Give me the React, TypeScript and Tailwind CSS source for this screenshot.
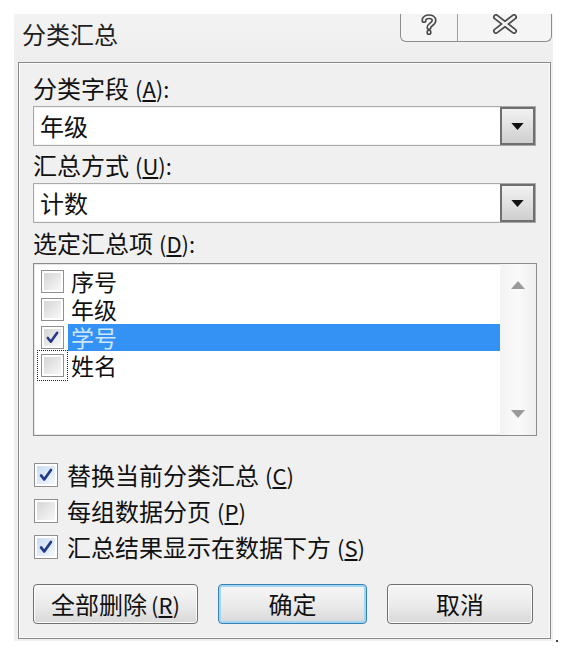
import React from 'react';

const FONT = '"Noto Sans CJK SC", "Noto Sans", sans-serif';

function Check({ color = '#23398a' }: { color?: string }) {
  return (
    <svg viewBox="0 0 20 20" className="h-full w-full">
      <path d="M4.5 10.5 L8 15 L15.5 4.5" fill="none" stroke={color} strokeWidth="3" strokeLinecap="round" strokeLinejoin="round" />
    </svg>
  );
}

function Box({ checked, size, tint, focus }: { checked?: boolean; size: number; tint?: boolean; focus?: boolean }) {
  return (
    <div
      className={
        'shrink-0 p-[1px] ' +
        (focus ? 'outline outline-1 outline-dotted outline-[#222] outline-offset-[2px] ' : '')
      }
      style={{ width: size, height: size }}
    >
      <div className="h-full w-full border border-[#8e8f8f] bg-white p-[2px]">
        <div
          className={
            'h-full w-full ' +
            (tint
              ? 'bg-linear-to-br from-[#c9dcf2] to-[#f3f8fd]'
              : 'bg-linear-to-br from-[#d6d6d6] to-[#f8f8f8]')
          }
        >
          {checked && <Check />}
        </div>
      </div>
    </div>
  );
}

function Combo({ value }: { value: string }) {
  return (
    <div className="flex h-[40px] border border-[#a9a9a9] bg-white shadow-[inset_0_0_0_1px_#f4f4f4]">
      <div className="flex flex-1 items-center pl-[6px] text-[24px] leading-none text-[#111]">{value}</div>
      <div className="flex w-[35px] items-center justify-center border-2 border-[#6f6f6f] bg-linear-to-b from-[#f2f2f2] to-[#cfcfcf]">
        <svg width="13" height="7" viewBox="0 0 14 8">
          <path d="M0 0 H14 L7 8 Z" fill="#111" />
        </svg>
      </div>
    </div>
  );
}

function Label({ text, k, h }: { text: string; k: string; h: string }) {
  return (
    <div className={'flex items-center text-[24px] leading-none text-[#111] ' + h}>
      {text}
      <span className="ml-[6px] text-[22px]">
        (<span className="underline underline-offset-2">{k}</span>):
      </span>
    </div>
  );
}

function Btn({ children, w, primary }: { children: React.ReactNode; w: string; primary?: boolean }) {
  return (
    <div
      className={
        'flex h-[40px] items-center justify-center rounded-[4px] border bg-linear-to-b from-[#f6f6f6] via-[#ececec] to-[#d8d8d8] text-[24px] leading-none text-[#111] ' +
        w +
        (primary
          ? ' border-[#3c7fb1] shadow-[inset_0_0_0_2px_#9fd6f5]'
          : ' border-[#707070] shadow-[inset_0_0_0_1px_#fbfbfb]')
      }
    >
      {children}
    </div>
  );
}

const ITEMS = [
  { name: '序号' },
  { name: '年级' },
  { name: '学号', checked: true, selected: true },
  { name: '姓名', focus: true },
];

export default function App() {
  return (
    <div className="relative h-[648px] w-[563px] bg-white" style={{ fontFamily: FONT }}>
      <div className="ml-[14px] pt-[14px]">
        <div className="flex h-[627px] w-[539px] flex-col bg-[#f0f0f0]">
          {/* title bar */}
          <div className="flex h-[48px] items-start justify-between bg-linear-to-b from-[#f3f3f3] to-[#eeeeee]">
            <div className="pl-[8px] pt-[8px] text-[24px] leading-none text-[#1e1e1e]">分类汇总</div>
            <div className="mr-[1px] flex h-[28px] w-[152px] rounded-b-[6px] border border-t-0 border-[#8d8d8d] bg-[#f5f5f5]">
              <div className="flex w-[57px] items-start justify-center border-r border-[#a0a0a0]">
                <svg width="18" height="22" viewBox="0 0 18 22">
                  <path d="M4 6.5 C4 1.5 14 1.5 14 6.5 C14 10 9 10.5 9 13.5 M9 18 L9 18.5" fill="none" stroke="#4a4a4a" strokeWidth="5.2" strokeLinecap="round" />
                  <path d="M4 6.5 C4 1.5 14 1.5 14 6.5 C14 10 9 10.5 9 13.5 M9 18 L9 18.5" fill="none" stroke="#f5f5f5" strokeWidth="2" strokeLinecap="round" />
                </svg>
              </div>
              <div className="flex flex-1 items-start justify-center">
                <svg width="28" height="20" viewBox="0 0 28 20">
                  <path d="M5 3 L23 17 M23 3 L5 17" fill="none" stroke="#4a4a4a" strokeWidth="6" strokeLinecap="round" />
                  <path d="M5 3 L23 17 M23 3 L5 17" fill="none" stroke="#f5f5f5" strokeWidth="2.6" strokeLinecap="round" />
                </svg>
              </div>
            </div>
          </div>

          {/* panel */}
          <div className="ml-[4px] flex h-[577px] w-[533px] flex-col border border-[#8a8a8a] px-[14px] pt-[7px] shadow-[inset_0_0_0_1px_#fbfbfb]">
            <Label text="分类字段" k="A" h="h-[36px]" />
            <Combo value="年级" />
            <Label text="汇总方式" k="U" h="h-[37px]" />
            <Combo value="计数" />
            <Label text="选定汇总项" k="D" h="h-[40px]" />

            {/* list box */}
            <div className="flex h-[173px] w-[504px] border border-[#8c8c8c] bg-white shadow-[inset_0_0_0_1px_#e6e6e6]">
              <div className="flex flex-1 flex-col pt-[3px]">
                {ITEMS.map(it => (
                  <div key={it.name} className="flex h-[28px] items-center">
                    <div className="ml-[6px] mr-[3px]">
                      <Box size={25} checked={it.checked} focus={it.focus} />
                    </div>
                    <div
                      className={
                        'flex h-[27px] flex-1 items-center pl-[3px] text-[23px] leading-[27px] ' +
                        (it.selected ? 'bg-[#3492f5] text-[#cfe6ff]' : 'text-[#111]')
                      }
                    >
                      {it.name}
                    </div>
                  </div>
                ))}
              </div>
              <div className="flex w-[36px] flex-col items-center justify-between bg-linear-to-r from-[#f3f3f3] via-[#fafafa] to-[#eeeeee] py-[17px]">
                <svg width="14" height="8" viewBox="0 0 14 8">
                  <path d="M0 8 L7 0 L14 8 Z" fill="#9a9a9a" />
                </svg>
                <svg width="14" height="8" viewBox="0 0 14 8">
                  <path d="M0 0 H14 L7 8 Z" fill="#9a9a9a" />
                </svg>
              </div>
            </div>

            {/* options */}
            <div className="mt-[21px] flex flex-col">
              {[
                { t: '替换当前分类汇总', k: 'C', c: true },
                { t: '每组数据分页', k: 'P', c: false },
                { t: '汇总结果显示在数据下方', k: 'S', c: true },
              ].map(o => (
                <div key={o.k} className="flex h-[36px] items-center">
                  <Box size={26} checked={o.c} tint={o.c} />
                  <div className="ml-[8px] flex items-center text-[24px] leading-none text-[#111]">
                    {o.t}
                    <span className="ml-[6px] text-[22px]">
                      (<span className="underline underline-offset-2">{o.k}</span>)
                    </span>
                  </div>
                </div>
              ))}
            </div>

            {/* buttons */}
            <div className="mt-[19px] flex gap-[20px]">
              <Btn w="w-[165px]">
                全部删除<span className="ml-[4px] text-[22px]">(<span className="underline underline-offset-2">R</span>)</span>
              </Btn>
              <Btn w="w-[149px]" primary>确定</Btn>
              <Btn w="w-[146px]">取消</Btn>
            </div>
          </div>
        </div>
      </div>
      <div className="absolute left-[556px] top-[640px] h-[2px] w-[2px] bg-[#444]" />
    </div>
  );
}
